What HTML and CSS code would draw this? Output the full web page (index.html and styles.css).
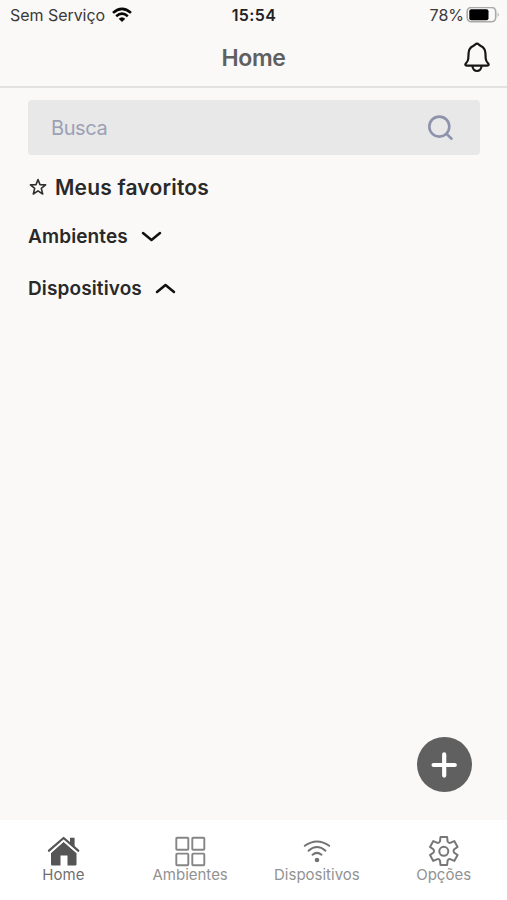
FILE: index.html
```html
<!DOCTYPE html>
<html lang="pt-BR">
<head>
<meta charset="utf-8">
<meta name="viewport" content="width=device-width, initial-scale=1">
<title>Home</title>
<link rel="stylesheet" href="styles.css">
</head>
<body>
<div class="app">
  <header class="top">
    <div class="status">
      <div class="carrier"><span>Sem Serviço</span>
        <svg class="wifi" width="20" height="16" viewBox="0 0 20 16" fill="none" stroke="#080808" stroke-width="2.6"><path d="M1 5.900Q10-2.100 19 5.900M4.200 9.200Q10 4.200 15.800 9.200"/><path d="M6.700 11.800Q10 8.800 13.300 11.800L10 15.100Z" fill="#080808" stroke="none"/></svg>
      </div>
      <time class="clock">15:54</time>
      <div class="power"><span>78%</span>
        <svg width="34" height="17" viewBox="0 0 34 17"><rect x="1.200" y=".4" width="28.500" height="14.400" rx="4.200" fill="none" stroke="#aaa" stroke-width="1.600"/><rect x="3.300" y="2.200" width="19.200" height="11" rx="2" fill="#000"/><path d="M31.600 5.500q2.400 2.200 0 4.500z" fill="#aaa"/></svg>
      </div>
    </div>
    <div class="titlebar">
      <h1>Home</h1>
      <svg class="bell" width="28" height="32" viewBox="0 0 28 32" fill="none" stroke="#171717" stroke-width="2.200" stroke-linejoin="round"><path d="M14 1.700c-1.500 0-2.300 1.500-3.800 2.200C7.100 5.300 5.700 7.500 5.600 11l-.3 5.500c-.1 1.800-.7 3-2.300 4.800-1.300 1.400-.8 2.300.7 2.300h20.600c1.500 0 2-.9.7-2.300-1.600-1.800-2.200-3-2.300-4.800l-.3-5.500c-.1-3.500-1.500-5.700-4.600-7.100-1.500-.7-2.300-2.200-3.800-2.200zM9.400 23.800c.3 6.900 8.900 6.900 9.200 0"/></svg>
    </div>
  </header>
  <main class="content">
    <label class="search">
      <input type="text" placeholder="Busca" aria-label="Busca">
      <svg width="28" height="28" viewBox="0 0 28 28" fill="none" stroke="#8e93ab" stroke-width="2.600" stroke-linecap="round"><circle cx="12.300" cy="12.600" r="10"/><path d="M19.500 19.800l5 4.900"/></svg>
    </label>
    <h2 class="favorites">
      <svg width="18" height="18" viewBox="0 0 18 18" fill="none" stroke="#303030" stroke-width="1.600" stroke-linejoin="round"><path d="M9 1.500l2 5.100 5.600.3-4.300 3.500 1.400 5.600L9 12.900 4.300 16l1.400-5.600L1.400 6.900 7 6.600z"/></svg>
      <span>Meus favoritos</span>
    </h2>
    <h3 class="section rooms"><span>Ambientes</span>
      <svg width="22" height="12" viewBox="0 0 22 12" fill="none" stroke="#111" stroke-width="2.500" stroke-linecap="round" stroke-linejoin="round"><path d="M3 3l8.500 7L20 3"/></svg>
    </h3>
    <h3 class="section devices"><span>Dispositivos</span>
      <svg width="22" height="12" viewBox="0 0 22 12" fill="none" stroke="#111" stroke-width="2.500" stroke-linecap="round" stroke-linejoin="round"><path d="M3 10l8.500-7L20 10"/></svg>
    </h3>
    <button class="add" aria-label="Adicionar">
      <svg width="30" height="30" viewBox="0 0 30 30" stroke="#fff" stroke-width="4.200" stroke-linecap="round"><path d="M14.200 4.400v21.200M3.600 15h21.200"/></svg>
    </button>
  </main>
  <nav class="tabs">
    <a class="tab active">
      <svg width="34" height="32" viewBox="0 0 34 32"><path d="M24 2.800h4.600v10L24 8.500z" fill="#555"/><path d="M17.600 6.800L30.500 18v11.200q0 1.200-1.200 1.200h-7.800V20.500h-7v9.900H6.200Q5 30.400 5 29.200V18z" fill="#555"/><path d="M4.200 16.600L17.600 5l13.400 11.600" fill="none" stroke="#fff" stroke-width="2.800"/><path d="M3 15.700L17.600 3l14.600 12.700" fill="none" stroke="#555" stroke-width="2.300" stroke-linecap="round" stroke-linejoin="round"/></svg>
      <span>Home</span>
    </a>
    <a class="tab">
      <svg width="34" height="32" viewBox="0 0 34 32" fill="none" stroke="#858585" stroke-width="1.900"><rect x="3.300" y="2.800" width="12" height="12" rx=".8"/><rect x="19.300" y="2.800" width="12" height="12" rx=".8"/><rect x="3.300" y="18.600" width="12" height="11.600" rx=".8"/><rect x="19.300" y="18.600" width="12" height="11.600" rx=".8"/></svg>
      <span>Ambientes</span>
    </a>
    <a class="tab">
      <svg width="34" height="32" viewBox="0 0 34 32" fill="none" stroke="#737373" stroke-width="2" stroke-linecap="round"><path d="M4.800 10.800Q17 2 29.200 10.800M8.500 15.700Q17 8.300 25.500 15.700M12.500 19.700Q17 16.100 21.500 19.700"/><circle cx="17" cy="25" r="2.300" fill="#737373" stroke="none"/></svg>
      <span>Dispositivos</span>
    </a>
    <a class="tab">
      <svg width="34" height="32" viewBox="0 0 34 32" fill="none" stroke="#777" stroke-width="2" stroke-linejoin="round"><path d="M13 6.400L13.500 2h6.600l.5 4.400Q21.500 8.300 23.200 7.900l4.100-1.800 3.300 5.800L27 14.500q-1 1.500 0 3l3.600 2.600-3.300 5.800-4.100-1.800q-1.700-.4-2.600 1.500l-.5 4.400h-6.600L13 25.600q-.9-1.900-2.600-1.500l-4.100 1.800L3 20.100l3.600-2.600q1-1.500 0-3L3 11.900l3.300-5.800 4.100 1.800Q12.100 8.300 13 6.400z"/><circle cx="16.800" cy="16.300" r="4.500"/></svg>
      <span>Opções</span>
    </a>
  </nav>
</div>
</body>
</html>
```

FILE: styles.css
```css
* { box-sizing: border-box; }
body { margin: 0; background: #faf9f8; color: #292929; font-family: Inter, sans-serif; }
svg { display: block; flex: none; }
h1, h2, h3 { margin: 0; white-space: nowrap; }
.app { width: 100%; height: 900px; display: flex; flex-direction: column; overflow: hidden; }
.top { height: 88px; flex: none; border-bottom: 2px solid #e2e2e1; }
.status { height: 30px; display: grid; grid-template-columns: 1fr auto 1fr; align-items: center; padding: 0 7px 0 10px; font-size: 16px; color: #3a3a3a; }
.carrier, .power { display: flex; align-items: center; }
.carrier { gap: 7px; letter-spacing: -.05px; }
.power { justify-content: flex-end; gap: 2px; }
.clock { color: #222; font-weight: 600; letter-spacing: .4px; margin-left: -2px; }
.titlebar { height: 55px; display: grid; grid-template-columns: 1fr auto 1fr; align-items: center; padding: 0 16px; }
.titlebar h1 { grid-column: 2; font-size: 23px; line-height: 28px; font-weight: 600; letter-spacing: -.4px; color: #606060; }
.bell { justify-self: end; }
.content { flex: 1; display: flex; flex-direction: column; padding: 12px 27px 28px 28px; }
.search { height: 55px; flex: none; display: flex; align-items: center; padding: 0 25px 0 23px; border-radius: 4px; background: #e8e8e8; }
.search input { flex: 1; min-width: 0; padding: 0; border: 0; outline: 0; background: transparent; font: 20px Inter, sans-serif; letter-spacing: -.4px; }
.search input::placeholder { color: #9ba0b5; opacity: 1; }
.favorites { height: 28px; margin-top: 18px; display: flex; align-items: center; gap: 8px; padding-left: 1px; font-size: 21px; font-weight: 600; letter-spacing: .2px; }
.section { height: 28px; display: flex; align-items: center; gap: 12px; font-size: 19px; font-weight: 600; letter-spacing: .12px; }
.rooms { margin-top: 21px; }
.devices { margin-top: 24px; }
.add { width: 55px; height: 55px; margin: auto 8px 0 auto; padding: 0; border: 0; border-radius: 50%; display: grid; place-items: center; background: #606060; }
.tabs { height: 80px; flex: none; display: grid; grid-template-columns: repeat(4, 1fr); background: #fff; }
.tab { display: flex; flex-direction: column; align-items: center; padding-top: 15px; color: #929292; font-size: 15px; line-height: 16px; }
.active { color: #6f6f6f; }
```
